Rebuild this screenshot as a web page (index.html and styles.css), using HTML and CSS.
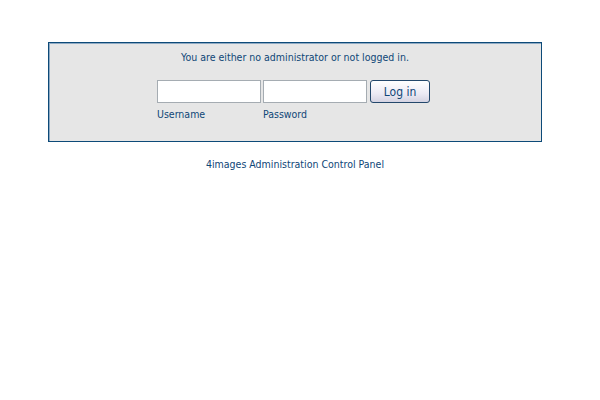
FILE: index.html
```html
<!DOCTYPE html>
<html lang="en">

<head>
    <meta charset="UTF-8">
    <title>4images Administration Control Panel</title>
    <link rel="stylesheet" href="styles.css">
</head>

<body>

    <div class="page">
        <div class="login-box">
            <p class="notice">You are either no administrator or not logged in.</p>
            <form class="login-form" action="#">
                <div class="field">
                    <input type="text" class="input" name="user_name">
                    <label>Username</label>
                </div>
                <div class="field">
                    <input type="password" class="input" name="user_password">
                    <label>Password</label>
                </div>
                <div class="field">
                    <button type="button" class="button">Log in</button>
                </div>
            </form>
        </div>

        <p class="footer">4images Administration Control Panel</p>
    </div>

</body>

</html>
```

FILE: styles.css
```css
html, body {
  margin: 0;
  padding: 0;
  background: #ffffff;
  font-family: "DejaVu Sans Condensed", "DejaVu Sans", sans-serif;
  font-size: 10.5px;
  color: #0f4677;
}

.page {
  padding: 42px 58px 0 48px;
}

.login-box {
  width: 492px;
  height: 98px;
  border: 1px solid #0d4a78;
  background: #e6e6e6;
  box-shadow: inset 1px 1px 0 #8eaac3;
  display: flex;
  flex-direction: column;
  align-items: center;
}

.notice {
  margin: 7px 0 0 0;
  line-height: 14px;
}

.login-form {
  display: flex;
  gap: 2px;
  margin-top: 16px;
  margin-right: 3px;
}

.field {
  display: flex;
  flex-direction: column;
}

.field label {
  margin-top: 4px;
  line-height: 14px;
}

.input {
  width: 104px;
  height: 23px;
  box-sizing: border-box;
  border: 1px solid #a5acb2;
  background: #ffffff;
  margin: 0;
  padding: 0 2px;
}

.button {
  width: 60px;
  height: 23px;
  margin-left: 1px;
  box-sizing: border-box;
  border: 1px solid #23476b;
  border-radius: 3px;
  background: linear-gradient(#ffffff, #eceaf4 60%, #d4d3e2);
  font-family: inherit;
  font-size: 12px;
  color: #0f4677;
  padding: 0;
}

.footer {
  margin: 15px 0 0 0;
  text-align: center;
  width: 494px;
  line-height: 14px;
}
```
